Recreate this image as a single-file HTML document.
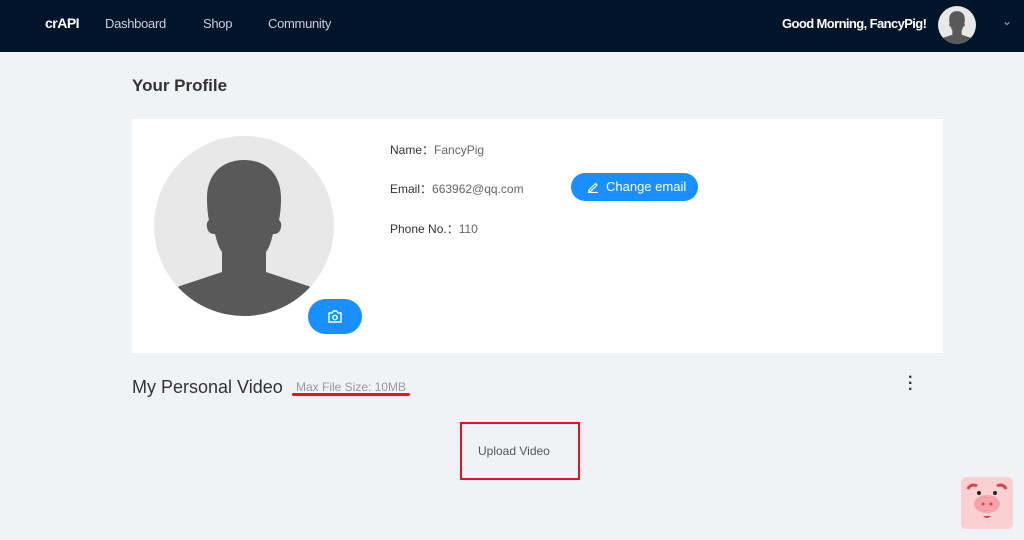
<!DOCTYPE html>
<html><head><meta charset="utf-8"><style>
*{margin:0;padding:0;box-sizing:border-box}
body{width:1024px;height:540px;background:#f0f2f5;font-family:"Liberation Sans",sans-serif;position:relative;overflow:hidden}
.nav{position:absolute;left:0;top:0;width:1024px;height:52px;background:#001529;color:#fff}
.nav span{position:absolute;top:16px;font-size:13px;letter-spacing:-0.3px}
.t{position:absolute;color:#222}
.card{position:absolute;left:132px;top:119px;width:811px;height:234px;background:#fff}
.lbl{position:absolute;font-size:12px;color:#333}
.lbl b{font-weight:normal;color:#666}
</style></head><body>
<div class="nav">
<span style="left:45px;font-weight:bold;font-size:14px;top:15px;letter-spacing:-0.5px">crAPI</span>
<span style="left:105px;color:#ccd">Dashboard</span>
<span style="left:203px;color:#ccd">Shop</span>
<span style="left:268px;color:#ccd">Community</span>
<span style="left:782px;font-weight:bold;letter-spacing:-0.6px">Good Morning, FancyPig!</span>
<svg style="position:absolute;left:938px;top:6px" width="38" height="38" viewBox="0 0 180 180"><clipPath id="c1"><circle cx="90" cy="90" r="90"/></clipPath><circle cx="90" cy="90" r="90" fill="#e8e8e8"/><g clip-path="url(#c1)" fill="#595959"><path d="M90 24c-22 0-37 14-37 38 0 10 1 18 2 22-3 2-3 8 0 12 2 2 4 2 6 2 2 8 4 14 7 18v20l-42 14c-12 4-14 14-14 30h156c0-16-2-26-14-30l-42-14v-20c3-4 5-10 7-18 2 0 4 0 6-2 3-4 3-10 0-12 1-4 2-12 2-22 0-24-15-38-37-38z"/></g></svg>
<span style="left:1002px;top:14px;color:#aab;font-size:12px">&#8964;</span>
</div>
<div class="t" style="left:132px;top:76px;font-size:17px;font-weight:bold;color:#333">Your Profile</div>
<div class="card">
<svg style="position:absolute;left:22px;top:17px" width="180" height="180" viewBox="0 0 180 180"><clipPath id="c2"><circle cx="90" cy="90" r="90"/></clipPath><circle cx="90" cy="90" r="90" fill="#e8e8e8"/><g clip-path="url(#c2)" fill="#595959"><path d="M90 24c-22 0-37 14-37 38 0 10 1 18 2 22-3 2-3 8 0 12 2 2 4 2 6 2 2 8 4 14 7 18v20l-42 14c-12 4-14 14-14 30h156c0-16-2-26-14-30l-42-14v-20c3-4 5-10 7-18 2 0 4 0 6-2 3-4 3-10 0-12 1-4 2-12 2-22 0-24-15-38-37-38z"/></g></svg>
<div style="position:absolute;left:176px;top:180px;width:54px;height:35px;border-radius:18px;background:#1890ff"><svg style="position:absolute;left:19px;top:10px" width="16" height="15" viewBox="0 0 16 15" fill="none" stroke="#fff" stroke-width="1.4"><path d="M2 4h3l1.5-2h3L11 4h3v9H2z"/><circle cx="8" cy="8.5" r="2.2"/></svg></div>
<div class="lbl" style="left:258px;top:22px">Name：<b>FancyPig</b></div>
<div class="lbl" style="left:258px;top:61px">Email：<b>663962@qq.com</b></div>
<div class="lbl" style="left:258px;top:101px">Phone No.：<b>110</b></div>
<div style="position:absolute;left:439px;top:54px;width:127px;height:28px;border-radius:14px;background:#1890ff;color:#fff;font-size:13px;line-height:28px;padding-left:35px">Change email<svg style="position:absolute;left:16px;top:8px" width="12" height="12" viewBox="0 0 12 12" fill="none" stroke="#fff" stroke-width="1.2"><path d="M2 9l6.5-6.5 1.5 1.5L3.5 10.5H2zM1 11.5h10"/></svg></div>
</div>
<div class="t" style="left:132px;top:377px;font-size:18px;color:#333">My Personal Video</div>
<div class="t" style="left:296px;top:380px;font-size:12px;color:#999">Max File Size: 10MB</div>
<div style="position:absolute;left:292px;top:393px;width:118px;height:3px;border-radius:2px;background:#e8141a"></div>
<div style="position:absolute;left:908px;top:375px;width:4px;height:18px;color:#333;font-size:16px;line-height:6px;font-weight:bold">·<br>·<br>·</div>
<div style="position:absolute;left:460px;top:422px;width:120px;height:58px;border:2px solid #e8141a"></div>
<div class="t" style="left:478px;top:444px;font-size:12px;color:#555">Upload Video</div>
<svg style="position:absolute;left:961px;top:477px" width="52" height="52" viewBox="0 0 52 52"><rect width="52" height="52" rx="5" fill="#fbd0d3"/><path d="M7 12a6 6 0 0 1 9-3M45 12a6 6 0 0 0-9-3" stroke="#d9434d" stroke-width="3" fill="none"/><circle cx="18" cy="16" r="2" fill="#222"/><circle cx="34" cy="16" r="2" fill="#222"/><ellipse cx="26" cy="27" rx="13" ry="9" fill="#f5a3ab"/><circle cx="22" cy="27" r="1.5" fill="#d9434d"/><circle cx="30" cy="27" r="1.5" fill="#d9434d"/><path d="M22 39q4 4 8 0z" fill="#d9434d"/></svg>
</body></html>
